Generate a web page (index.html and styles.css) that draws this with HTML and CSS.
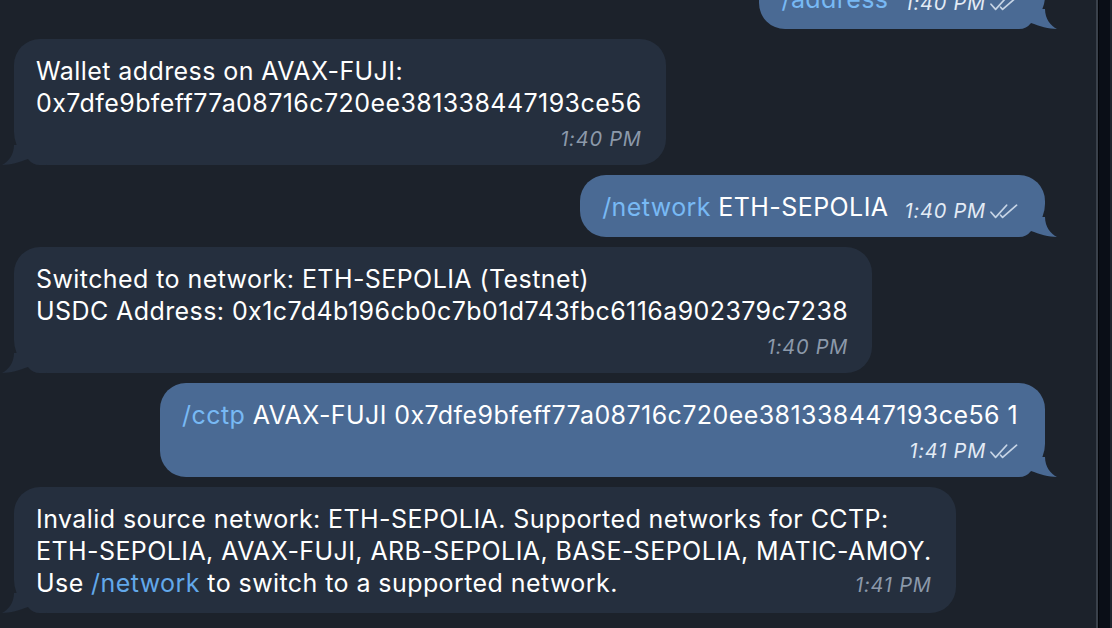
FILE: index.html
```html
<!DOCTYPE html>
<html>
<head>
<meta charset="utf-8">
<link rel="stylesheet" href="styles.css">
</head>
<body>
<div class="app">
  <main class="chat">
    <div class="bubble out first">
      <span class="cmd">/address</span><span class="meta">1:40 PM<svg class="checks" viewBox="0 0 28 15"><path d="M1 8.2 L5.6 13.4 L16.6 1.2 M10.6 11.2 L12.6 13.4 L26.6 1.2"/></svg></span>
      <svg class="tail" viewBox="0 0 44 20"><path d="M12 0 C12 10 6 17 0 20 C8 20 18 17 26 14 A15 15 0 0 0 38 20 L44 20 L44 0 Z"/></svg>
    </div>

    <div class="bubble in">
      <div class="line">Wallet address on AVAX-FUJI:</div>
      <div class="line">0x7dfe9bfeff77a08716c720ee381338447193ce56</div>
      <div class="meta-line"><span class="meta">1:40 PM</span></div>
      <svg class="tail" viewBox="0 0 44 20"><path d="M12 0 C12 10 6 17 0 20 C8 20 18 17 26 14 A15 15 0 0 0 38 20 L44 20 L44 0 Z"/></svg>
    </div>

    <div class="bubble out">
      <span class="cmd">/network</span> ETH-SEPOLIA<span class="meta">1:40 PM<svg class="checks" viewBox="0 0 28 15"><path d="M1 8.2 L5.6 13.4 L16.6 1.2 M10.6 11.2 L12.6 13.4 L26.6 1.2"/></svg></span>
      <svg class="tail" viewBox="0 0 44 20"><path d="M12 0 C12 10 6 17 0 20 C8 20 18 17 26 14 A15 15 0 0 0 38 20 L44 20 L44 0 Z"/></svg>
    </div>

    <div class="bubble in">
      <div class="line">Switched to network: ETH-SEPOLIA (Testnet)</div>
      <div class="line">USDC Address: 0x1c7d4b196cb0c7b01d743fbc6116a902379c7238</div>
      <div class="meta-line"><span class="meta">1:40 PM</span></div>
      <svg class="tail" viewBox="0 0 44 20"><path d="M12 0 C12 10 6 17 0 20 C8 20 18 17 26 14 A15 15 0 0 0 38 20 L44 20 L44 0 Z"/></svg>
    </div>

    <div class="bubble out">
      <div class="line"><span class="cmd">/cctp</span> AVAX-FUJI 0x7dfe9bfeff77a08716c720ee381338447193ce56 1</div>
      <div class="meta-line"><span class="meta">1:41 PM<svg class="checks" viewBox="0 0 28 15"><path d="M1 8.2 L5.6 13.4 L16.6 1.2 M10.6 11.2 L12.6 13.4 L26.6 1.2"/></svg></span></div>
      <svg class="tail" viewBox="0 0 44 20"><path d="M12 0 C12 10 6 17 0 20 C8 20 18 17 26 14 A15 15 0 0 0 38 20 L44 20 L44 0 Z"/></svg>
    </div>

    <div class="bubble in">
      <div class="line">Invalid source network: ETH-SEPOLIA. Supported networks for CCTP:</div>
      <div class="line">ETH-SEPOLIA, AVAX-FUJI, ARB-SEPOLIA, BASE-SEPOLIA, MATIC-AMOY.</div>
      <div class="line last"><span>Use <span class="cmd">/network</span> to switch to a supported network.</span><span class="meta">1:41 PM</span></div>
      <svg class="tail" viewBox="0 0 44 20"><path d="M12 0 C12 10 6 17 0 20 C8 20 18 17 26 14 A15 15 0 0 0 38 20 L44 20 L44 0 Z"/></svg>
    </div>
  </main>
  <div class="scroll"></div>
</div>
</body>
</html>
```

FILE: styles.css
```css
html, body {
  margin: 0;
  padding: 0;
  height: 100%;
  overflow: hidden;
  background: #1c222b;
}

.app {
  display: flex;
  width: 1112px;
  height: 628px;
  overflow: hidden;
}

.chat {
  flex: 1;
  display: flex;
  flex-direction: column;
  gap: 10px;
  padding: 0 51px 0 14px;
  overflow: hidden;
  font-family: Inter, "Noto Sans", sans-serif;
  font-size: 25px;
  letter-spacing: 0.42px;
  line-height: 32px;
  color: #ffffff;
}

.bubble {
  position: relative;
  padding: 16px 24px 14px 22px;
  border-radius: 26px;
  white-space: nowrap;
}

.bubble.in {
  align-self: flex-start;
  background: #252f3e;
  border-bottom-left-radius: 33px;
}

.bubble.out {
  align-self: flex-end;
  background: #4a6a94;
  border-bottom-right-radius: 33px;
  padding-right: 27px;
}

.bubble.first {
  margin-top: -33px;
}

.line,
.meta-line {
  height: 32px;
}

.tail {
  position: absolute;
  bottom: 0;
  width: 44px;
  height: 20px;
}

.bubble.in .tail {
  left: -12px;
  fill: #252f3e;
}

.bubble.out .tail {
  right: -12px;
  fill: #4a6a94;
  transform: scaleX(-1);
}

.bubble.in .cmd {
  color: #62a8ea;
}

.bubble.out .cmd {
  color: #78b9f4;
}

.meta {
  font-size: 20px;
  letter-spacing: 0.8px;
  line-height: 20px;
  font-style: italic;
  vertical-align: -2px;
  margin-left: 16px;
}

.bubble.in .meta {
  color: #8c99aa;
}

.bubble.out .meta {
  color: #e3ebf5;
}

.checks {
  width: 28px;
  height: 15px;
  margin-left: 4px;
  vertical-align: -1px;
  fill: none;
  stroke: #c6d4e5;
  stroke-width: 1.7;
  stroke-linecap: round;
  stroke-linejoin: round;
}

.meta-line {
  text-align: right;
}

.line.last {
  display: flex;
  justify-content: space-between;
  align-items: baseline;
}

.scroll {
  width: 12px;
  height: 628px;
  flex: none;
  border-left: 2px solid #3a414b;
  border-right: 2px solid #1f252e;
  background: #0a0e17;
  box-shadow: inset 1px 0 0 #030509;
}
```
